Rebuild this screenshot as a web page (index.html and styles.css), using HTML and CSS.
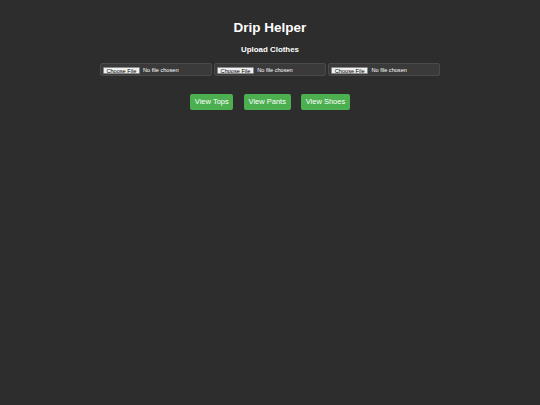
FILE: index.html
```html
<!DOCTYPE html>
<html lang="en">
<head>
<meta charset="utf-8">
<title>Drip Helper</title>
<link rel="stylesheet" href="styles.css">
</head>
<body>
<main class="app">
  <h1 class="title">Drip Helper</h1>
  <h3 class="subtitle">Upload Clothes</h3>
  <div class="uploads">
    <input class="file" type="file" accept="image/*">
    <input class="file" type="file" accept="image/*">
    <input class="file" type="file" accept="image/*">
  </div>
  <div class="actions">
    <button class="btn" type="button">View Tops</button>
    <button class="btn" type="button">View Pants</button>
    <button class="btn" type="button">View Shoes</button>
  </div>
</main>
</body>
</html>
```

FILE: styles.css
```css
html, body {
  margin: 0;
  padding: 0;
  background: #2d2d2d;
  color: #ffffff;
  font-family: "Liberation Sans", Arial, sans-serif;
}

body {
  min-height: 405px;
}

.app {
  display: flex;
  flex-direction: column;
  align-items: center;
  padding-top: 20px;
}

.title {
  margin: 0;
  font-size: 13.5px;
  line-height: 16px;
  font-weight: bold;
}

.subtitle {
  margin: 9px 0 0;
  font-size: 7.9px;
  line-height: 10px;
  font-weight: bold;
}

.uploads {
  display: flex;
  gap: 2.2px;
  margin-top: 8px;
}

.file {
  box-sizing: border-box;
  width: 112px;
  height: 13.4px;
  margin: 0;
  padding: 0 2px;
  border: 0.6px solid #4a4a4a;
  border-radius: 2px;
  background: #3a3a3a;
  color: #ffffff;
  font-family: "Liberation Sans", Arial, sans-serif;
  font-size: 5.6px;
  line-height: 12px;
}

.file::file-selector-button {
  box-sizing: border-box;
  height: 7.4px;
  margin: 0 3.2px 0 0;
  padding: 0 2.6px;
  border: 0.5px solid #8a8a8a;
  border-radius: 1px;
  background: #efefef;
  color: #000000;
  font-family: "Liberation Sans", Arial, sans-serif;
  font-size: 5.6px;
  line-height: 6.4px;
  vertical-align: middle;
}

.actions {
  display: flex;
  gap: 10.6px;
  margin-top: 17.5px;
}

.btn {
  box-sizing: border-box;
  height: 16.3px;
  margin: 0;
  padding: 0 4.6px;
  border: none;
  border-radius: 2px;
  background: #4caf50;
  color: #ffffff;
  font-family: "Liberation Sans", Arial, sans-serif;
  font-size: 7.5px;
  line-height: 16.3px;
}
```
